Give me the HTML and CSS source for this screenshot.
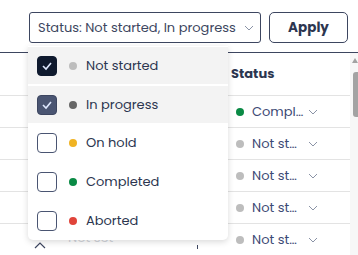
FILE: index.html
```html
<!DOCTYPE html>
<html lang="en">
<head>
    <meta charset="UTF-8">
    <title>Tasks - Status filter</title>
    <link rel="stylesheet" href="styles.css">
</head>
<body>
    <div class="page">
        <div class="toolbar">
            <div class="select">
                <span>Status: Not started, In progress</span>
                <svg class="chev" width="10" height="6" viewBox="0 0 10 6"><polyline points="1,1 5,5 9,1" fill="none" stroke="#8a93a6" stroke-width="1"/></svg>
            </div>
            <button class="apply" type="button">Apply</button>
        </div>

        <div class="table-wrap">
            <div class="table">
                <div class="row head">
                    <div class="cell left"></div>
                    <div class="cell status">Status</div>
                    <div class="cell end"></div>
                </div>
                <div class="row">
                    <div class="cell left"></div>
                    <div class="cell status"><i class="dot green"></i><span class="txt">Compl…</span><svg class="chev" width="10" height="6" viewBox="0 0 10 6"><polyline points="1,1 5,5 9,1" fill="none" stroke="#8a93a6" stroke-width="1"/></svg></div>
                    <div class="cell end"></div>
                </div>
                <div class="row">
                    <div class="cell left"></div>
                    <div class="cell status"><i class="dot grey"></i><span class="txt">Not st…</span><svg class="chev" width="10" height="6" viewBox="0 0 10 6"><polyline points="1,1 5,5 9,1" fill="none" stroke="#8a93a6" stroke-width="1"/></svg></div>
                    <div class="cell end"></div>
                </div>
                <div class="row">
                    <div class="cell left"></div>
                    <div class="cell status"><i class="dot grey"></i><span class="txt">Not st…</span><svg class="chev" width="10" height="6" viewBox="0 0 10 6"><polyline points="1,1 5,5 9,1" fill="none" stroke="#8a93a6" stroke-width="1"/></svg></div>
                    <div class="cell end"></div>
                </div>
                <div class="row">
                    <div class="cell left"></div>
                    <div class="cell status"><i class="dot grey"></i><span class="txt">Not st…</span><svg class="chev" width="10" height="6" viewBox="0 0 10 6"><polyline points="1,1 5,5 9,1" fill="none" stroke="#8a93a6" stroke-width="1"/></svg></div>
                    <div class="cell end"></div>
                </div>
                <div class="row last">
                    <div class="cell left">
                        <svg class="up" width="12" height="7" viewBox="0 0 12 7"><polyline points="1,6 6,1 11,6" fill="none" stroke="#3d4660" stroke-width="1.2"/></svg>
                        <span class="notset">Not set</span>
                        <span class="tick"></span>
                    </div>
                    <div class="cell status"><i class="dot grey"></i><span class="txt">Not st…</span><svg class="chev" width="10" height="6" viewBox="0 0 10 6"><polyline points="1,1 5,5 9,1" fill="none" stroke="#8a93a6" stroke-width="1"/></svg></div>
                    <div class="cell end"></div>
                </div>
            </div>
            <div class="scrollbar">
                <svg class="arrow" width="6" height="5" viewBox="0 0 6 5"><polygon points="0,5 3,0 6,5" fill="#a3a3a3"/></svg>
                <div class="thumb"></div>
            </div>
        </div>

        <!-- dropdown menu of the status select -->
        <div class="menu">
            <div class="option selected">
                <span class="box on"><svg width="12" height="10" viewBox="0 0 12 10"><polyline points="2,5 5,8 10,2" fill="none" stroke="#dfe9ff" stroke-width="1.6"/></svg></span>
                <i class="dot light"></i>
                <span class="label">Not started</span>
            </div>
            <div class="option selected second">
                <span class="box on mid"><svg width="12" height="10" viewBox="0 0 12 10"><polyline points="2,5 5,8 10,2" fill="none" stroke="#dfe9ff" stroke-width="1.6"/></svg></span>
                <i class="dot darkgrey"></i>
                <span class="label">In progress</span>
            </div>
            <div class="option">
                <span class="box"></span>
                <i class="dot yellow"></i>
                <span class="label">On hold</span>
            </div>
            <div class="option">
                <span class="box"></span>
                <i class="dot green"></i>
                <span class="label">Completed</span>
            </div>
            <div class="option">
                <span class="box"></span>
                <i class="dot red"></i>
                <span class="label">Aborted</span>
            </div>
        </div>
    </div>
</body>
</html>
```

FILE: styles.css
```css
* {
    margin: 0;
    padding: 0;
    box-sizing: border-box;
}

body {
    font-family: "Poppins", "Inter", "Noto Sans", sans-serif;
    background: #fff;
    color: #2c3650;
    overflow: hidden;
}

.page {
    position: relative;
    width: 358px;
    height: 255px;
    overflow: hidden;
}

/* Top filter bar */
.toolbar {
    display: flex;
    justify-content: flex-end;
    gap: 8px;
    padding: 12px 10px 0 0;
    height: 52px;
}

.select {
    width: 232px;
    height: 31px;
    border: 1px solid #3d4660;
    border-radius: 3px;
    display: flex;
    align-items: center;
    padding-left: 8px;
    gap: 8px;
    font-size: 13px;
    color: #3d4660;
}

.select .chev {
    margin-top: 1px;
}

.apply {
    width: 79px;
    height: 31px;
    border: 1px solid #3d4660;
    border-radius: 5px;
    background: #fff;
    font-family: inherit;
    font-weight: 700;
    font-size: 13.5px;
    color: #2c3650;
}

/* Table behind the menu */
.table-wrap {
    display: flex;
    border-top: 1px solid #3d4660;
}

.table {
    width: 350px;
}

.row {
    display: flex;
    height: 32px;
    border-bottom: 1px solid #e3e3e3;
}

.row.head {
    height: 43px;
}

.row.last {
    border-bottom: none;
}

.cell {
    display: flex;
    align-items: center;
}

.cell.left {
    width: 222px;
}

.cell.status {
    width: 110px;
    padding-left: 14px;
    font-size: 13px;
}

.head .cell.status {
    font-weight: 700;
    color: #2c3650;
    padding-left: 9px;
}

.cell.end {
    flex: 1;
}

.status .dot {
    margin-right: 8px;
}

.status .txt {
    color: #3d4a75;
    width: 56px;
}

.up {
    margin-left: 34px;
    margin-top: 10px;
}

.notset {
    margin-left: 22px;
    margin-top: -4px;
    font-size: 13px;
    color: #d3d6dc;
}

.tick {
    width: 1px;
    height: 4px;
    background: #3d4660;
    margin-left: 84px;
    margin-top: 14px;
}

.scrollbar {
    width: 8px;
    background: #f7f7f7;
    display: flex;
    flex-direction: column;
    align-items: flex-end;
    padding-top: 5px;
}

.thumb {
    margin-top: 9px;
    width: 5px;
    height: 45px;
    background: #a3a3a3;
    border-radius: 3px 0 0 3px;
}

.dot {
    display: inline-block;
    width: 8px;
    height: 8px;
    border-radius: 50%;
    flex-shrink: 0;
}

.dot.grey, .dot.light { background: #bdbdbd; }
.dot.darkgrey { background: #666; }
.dot.yellow { background: #f0b323; }
.dot.green { background: #0a8a45; }
.dot.red { background: #e0443a; }

/* Status dropdown menu */
.menu {
    position: absolute;
    left: 28px;
    top: 46px;
    width: 200px;
    height: 194px;
    background: #fff;
    border-radius: 0 0 5px 5px;
    box-shadow: 0 2px 6px rgba(0, 0, 0, 0.15);
    padding-top: 1px;
}

.option {
    display: flex;
    align-items: center;
    height: 39px;
    padding-left: 9px;
}

.option.selected {
    height: 37px;
    background: #f3f3f3;
}

.option.second {
    margin-top: 2px;
}

.box {
    width: 20px;
    height: 20px;
    border: 1.5px solid #4a5572;
    border-radius: 4px;
    display: flex;
    align-items: center;
    justify-content: center;
    margin-right: 12px;
}

.box.on {
    background: #0f1a2e;
    border-color: #0f1a2e;
}

.box.on.mid {
    background: #4a5572;
    border-color: #3d4660;
}

.option .dot {
    margin-right: 9px;
}

.label {
    font-size: 13px;
    color: #2c3650;
}
```
